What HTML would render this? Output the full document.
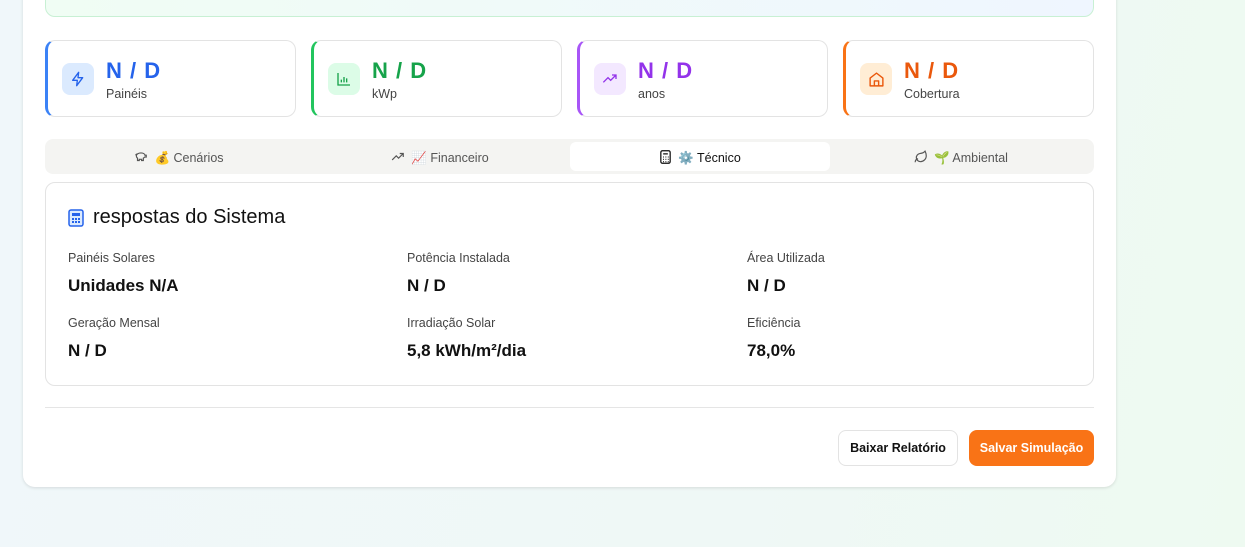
<!DOCTYPE html><html><head><meta charset="utf-8"><style>
*{box-sizing:border-box;margin:0;padding:0}
body{width:1245px;height:547px;overflow:hidden;font-family:"Liberation Sans","DejaVu Sans",sans-serif;background:linear-gradient(100deg,#f0f7fa 0%,#eff8f6 60%,#eefaf1 100%);position:relative;color:#111}
.main{position:absolute;left:23px;top:-20px;width:1093px;height:507px;background:#fff;border-radius:12px;box-shadow:0 1px 3px rgba(0,0,0,.12)}
.banner{position:absolute;left:45px;top:-20px;width:1049px;height:37px;border:1px solid #c8f0d4;border-radius:10px;background:linear-gradient(90deg,#f0fdf4,#eff6ff)}
.stat{position:absolute;top:40px;width:251px;height:77px;background:#fff;border:1px solid #e3e3e3;border-radius:10px;border-left:3px solid}
.ic{position:absolute;left:14px;top:22px;width:32px;height:32px;border-radius:8px;display:flex;align-items:center;justify-content:center}
.val{position:absolute;left:58px;top:17px;font-size:22px;font-weight:bold;letter-spacing:1px}
.lbl{position:absolute;left:58px;top:46px;font-size:12.5px;color:#444}
.tabs{position:absolute;left:45px;top:139px;width:1049px;height:35px;background:#f4f4f2;border-radius:8px}
.tab{position:absolute;top:3px;height:29px;width:260px;display:flex;align-items:center;justify-content:center;font-size:12.5px;color:#555;gap:6px;padding-top:3px}
.tab.act{background:#fff;border-radius:6px;color:#111}
.tab svg{margin-top:-2px}
.card{position:absolute;left:45px;top:182px;width:1049px;height:204px;border:1px solid #e3e3e3;border-radius:10px;background:#fff}
.title{position:absolute;left:22px;top:23px;font-size:20px;display:flex;align-items:center;gap:9px}
.f{position:absolute}
.f .l{font-size:12.5px;color:#444}
.f .v{font-size:17px;font-weight:bold;margin-top:11px}
.hr{position:absolute;left:45px;top:407px;width:1049px;height:1px;background:#e5e5e5}
.btn{position:absolute;top:430px;height:36px;border-radius:8px;font-size:12.5px;font-weight:bold;display:flex;align-items:center;justify-content:center}
</style></head><body>
<div class="main"></div>
<div class="banner"></div>

<div class="stat" style="left:45px;border-left-color:#3b82f6"><div class="ic" style="background:#dbeafe"><svg width="16" height="16" viewBox="0 0 24 24" fill="none" stroke="#2563eb" stroke-width="2" stroke-linejoin="round"><path d="M13 2L4 14h7l-1 8 9-12h-7z"/></svg></div><div class="val" style="color:#2563eb">N / D</div><div class="lbl">Painéis</div></div>
<div class="stat" style="left:311px;border-left-color:#22c55e"><div class="ic" style="background:#dcfce7"><svg width="16" height="16" viewBox="0 0 24 24" fill="none" stroke="#16a34a" stroke-width="2"><path d="M3 3v18h18M8 17v-4M12 17V9M16 17v-6"/></svg></div><div class="val" style="color:#16a34a">N / D</div><div class="lbl">kWp</div></div>
<div class="stat" style="left:577px;border-left-color:#a855f7"><div class="ic" style="background:#f3e8ff"><svg width="16" height="16" viewBox="0 0 24 24" fill="none" stroke="#9333ea" stroke-width="2"><path d="M2 17l7-7 4 4 8-8M15 6h6v6"/></svg></div><div class="val" style="color:#9333ea">N / D</div><div class="lbl">anos</div></div>
<div class="stat" style="left:843px;border-left-color:#f97316"><div class="ic" style="background:#ffedd5"><svg width="17" height="17" viewBox="0 0 24 24" fill="none" stroke="#ea580c" stroke-width="2" stroke-linejoin="round"><path d="M3 10l9-7 9 7v11H3z M9 21v-7h6v7"/></svg></div><div class="val" style="color:#ea580c">N / D</div><div class="lbl">Cobertura</div></div>

<div class="tabs">
<div class="tab" style="left:4px"><svg width="14" height="14" viewBox="0 0 24 24" fill="none" stroke="#555" stroke-width="2"><path d="M19 10c0-3-3-5-7-5S4 7 4 10c0 2 1 3 2 4v4h3v-2h4v2h3v-4c1-.5 2-1.5 2.5-2H21v-3h-2zM3 9c0-1 1-2 2-2"/></svg>💰 Cenários</div>
<div class="tab" style="left:265px"><svg width="14" height="14" viewBox="0 0 24 24" fill="none" stroke="#555" stroke-width="2"><path d="M2 17l7-7 4 4 8-8M15 6h6v6"/></svg>📈 Financeiro</div>
<div class="tab act" style="left:525px"><svg width="13" height="14" viewBox="0 0 16 18" fill="none" stroke="#111" stroke-width="1.6"><rect x="2" y="1" width="12" height="16" rx="2"/><path d="M5 5h6M5 9h1M8 9h1M11 9h1M5 12h1M8 12h1M11 12h1M5 15h1M8 15h1M11 15h1"/></svg>⚙️ Técnico</div>
<div class="tab" style="left:786px"><svg width="14" height="14" viewBox="0 0 24 24" fill="none" stroke="#555" stroke-width="2"><path d="M11 20A7 7 0 0 1 9.8 6.1C15.5 5 17 4.5 19 2c1 2 2 4.2 2 8 0 5.5-4.8 10-10 10zM2 21c0-3 1.9-5.4 5-6"/></svg>🌱 Ambiental</div>
</div>

<div class="card">
<div class="title"><svg width="16" height="18" viewBox="0 0 16 18"><rect x="1" y="1" width="14" height="16" rx="2" fill="#dbeafe" stroke="#2563eb" stroke-width="1.5"/><rect x="4" y="4" width="8" height="3" fill="#2563eb"/><g fill="#2563eb"><rect x="4" y="9" width="2" height="2"/><rect x="7" y="9" width="2" height="2"/><rect x="10" y="9" width="2" height="2"/><rect x="4" y="12" width="2" height="2"/><rect x="7" y="12" width="2" height="2"/><rect x="10" y="12" width="2" height="2"/></g></svg><span>respostas do Sistema</span></div>
<div class="f" style="left:22px;top:68px"><div class="l">Painéis Solares</div><div class="v">Unidades N/A</div></div>
<div class="f" style="left:361px;top:68px"><div class="l">Potência Instalada</div><div class="v">N / D</div></div>
<div class="f" style="left:701px;top:68px"><div class="l">Área Utilizada</div><div class="v">N / D</div></div>
<div class="f" style="left:22px;top:133px"><div class="l">Geração Mensal</div><div class="v">N / D</div></div>
<div class="f" style="left:361px;top:133px"><div class="l">Irradiação Solar</div><div class="v">5,8 kWh/m²/dia</div></div>
<div class="f" style="left:701px;top:133px"><div class="l">Eficiência</div><div class="v">78,0%</div></div>
</div>

<div class="hr"></div>
<div class="btn" style="left:838px;width:120px;border:1px solid #e3e3e3;background:#fff;color:#111">Baixar Relatório</div>
<div class="btn" style="left:969px;width:125px;background:#f97316;color:#fff">Salvar Simulação</div>
</body></html>
